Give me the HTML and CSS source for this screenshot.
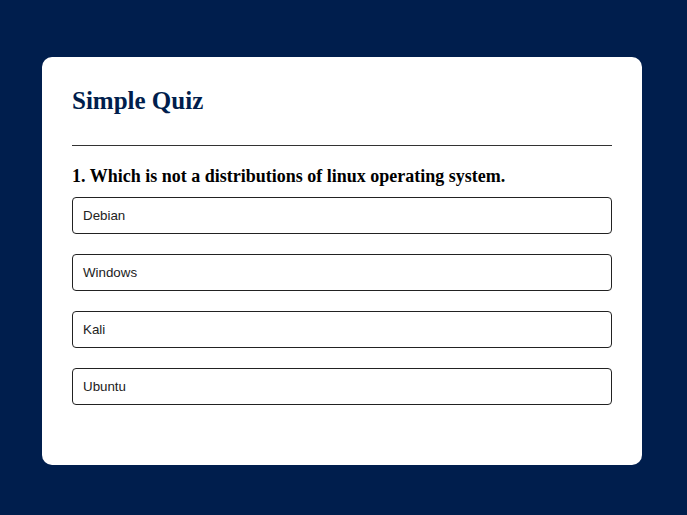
FILE: index.html
```html
<!DOCTYPE html>
<html>
<head>
<meta charset="utf-8">
<link rel="stylesheet" href="styles.css">
</head>
<body>
<div class="app">
  <h1 class="title">Simple Quiz</h1>
  <div class="quiz">
    <h2 class="question">1. Which is not a distributions of linux operating system.</h2>
    <div class="answers">
      <button class="btn">Debian</button>
      <button class="btn">Windows</button>
      <button class="btn">Kali</button>
      <button class="btn">Ubuntu</button>
    </div>
  </div>
</div>
</body>
</html>
```
FILE: styles.css
```css
* { box-sizing: border-box; }
html, body { margin: 0; }
body {
  background: #001e4d;
  min-height: 515px;
  padding: 57px 0 0 42px;
  font-family: "Liberation Serif", serif;
}
.app {
  background: #fff;
  width: 600px;
  height: 408px;
  border-radius: 10px;
  padding: 30px;
}
.title {
  margin: 0;
  font-size: 25px;
  font-weight: 700;
  color: #001e4d;
  padding-bottom: 30px;
  border-bottom: 1px solid #333;
  line-height: 28px;
}
.quiz { padding-top: 20px; }
.question {
  margin: 0 0 11px;
  font-size: 18px;
  font-weight: 700;
  color: #000;
  line-height: 20px;
}
.answers {
  display: flex;
  flex-direction: column;
  gap: 20px;
}
.btn {
  display: block;
  width: 100%;
  background: #fff;
  color: #222;
  border: 1px solid #222;
  border-radius: 4px;
  padding: 10px;
  text-align: left;
  font-family: "Liberation Sans", Arial, sans-serif;
  font-size: 13.33px;
  line-height: 15px;
  height: 37px;
}
```
